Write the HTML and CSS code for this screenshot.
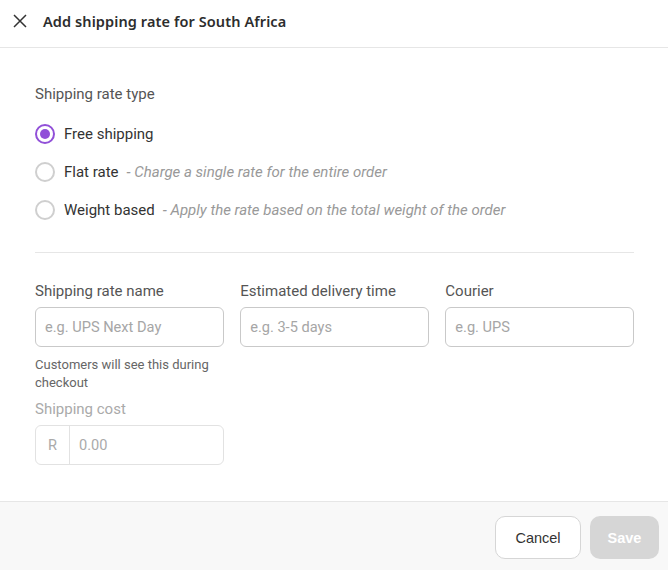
FILE: index.html
```html
<!DOCTYPE html>
<html>
<head>
<meta charset="utf-8">
<link rel="stylesheet" href="styles.css">
</head>
<body>
<div class="modal">
  <header class="header">
    <svg class="close" width="14" height="14" viewBox="0 0 14 14"><path d="M1 1L13 13M13 1L1 13" stroke="#333" stroke-width="1.5" fill="none"/></svg>
    <h1 class="title">Add shipping rate for South Africa</h1>
  </header>
  <main class="body">
    <div class="section-label">Shipping rate type</div>
    <div class="radios">
      <div class="radio-row"><span class="radio checked"></span><span class="radio-label">Free shipping</span></div>
      <div class="radio-row"><span class="radio"></span><span class="radio-label">Flat rate</span><span class="hint">- Charge a single rate for the entire order</span></div>
      <div class="radio-row"><span class="radio"></span><span class="radio-label">Weight based</span><span class="hint">- Apply the rate based on the total weight of the order</span></div>
    </div>
    <hr class="divider">
    <div class="fields">
      <div class="field">
        <label class="label">Shipping rate name</label>
        <div class="input"><span class="ph">e.g. UPS Next Day</span></div>
        <div class="help">Customers will see this during checkout</div>
        <label class="label disabled cost-label">Shipping cost</label>
        <div class="input prefixed"><span class="prefix">R</span><span class="ph value">0.00</span></div>
      </div>
      <div class="field">
        <label class="label">Estimated delivery time</label>
        <div class="input"><span class="ph">e.g. 3-5 days</span></div>
      </div>
      <div class="field">
        <label class="label">Courier</label>
        <div class="input"><span class="ph">e.g. UPS</span></div>
      </div>
    </div>
  </main>
  <footer class="footer">
    <button class="btn cancel">Cancel</button>
    <button class="btn save">Save</button>
  </footer>
</div>
</body>
</html>
```
FILE: styles.css
```css
* { box-sizing: border-box; }
html, body { margin: 0; padding: 0; background: #fff; }
body { font-family: Roboto, "Noto Sans", sans-serif; color: #333; width: 668px; height: 570px; overflow: hidden; }
.modal { display: flex; flex-direction: column; height: 570px; }
.header { height: 48px; display: flex; align-items: center; border-bottom: 1px solid #e6e6e6; padding-left: 13px; padding-bottom: 5px; }
.close { flex: none; }
.title { margin: 0 0 0 16px; font-family: "Noto Sans", sans-serif; font-size: 14.5px; font-weight: 600; color: #2d2d2d; letter-spacing: 0.1px; }
.body { flex: 1; padding: 37px 34px 0 35px; }
.section-label { font-size: 15px; color: #555; line-height: 18px; }
.radios { margin-top: 21px; display: flex; flex-direction: column; gap: 18px; }
.radio-row { display: flex; align-items: center; height: 20px; }
.radio { width: 20px; height: 20px; border-radius: 50%; border: 2px solid #cfcfcf; flex: none; position: relative; }
.radio.checked { border-color: #9150d8; }
.radio.checked::after { content: ""; position: absolute; left: 3px; top: 3px; width: 10px; height: 10px; border-radius: 50%; background: #9150d8; }
.radio-label { margin-left: 9px; font-size: 15px; color: #333; }
.hint { margin-left: 8px; font-size: 15px; font-style: italic; color: #999; }
.divider { border: 0; border-top: 1px solid #e6e6e6; margin: 32px 0 0; }
.fields { display: grid; grid-template-columns: 1fr 1fr 1fr; column-gap: 16.5px; margin-top: 29px; }
.field { display: flex; flex-direction: column; }
.label { font-size: 15px; color: #555; line-height: 18px; }
.label.disabled { color: #aaa; }
.input { margin-top: 7px; height: 40px; border: 1px solid #c9c9c9; border-radius: 6px; display: flex; align-items: center; padding-left: 9px; }
.ph { font-size: 14.6px; color: #a6a6a6; }
.help { margin-top: 9px; font-size: 13px; line-height: 18px; color: #666; }
.cost-label { margin-top: 8px; }
.prefixed { border-color: #e2e2e2; padding-left: 0; }
.prefix { width: 34px; height: 100%; display: flex; align-items: center; justify-content: center; border-right: 1px solid #e2e2e2; color: #aaa; font-size: 14.6px; }
.value { margin-left: 9px; color: #aaa; }
.footer { height: 69px; border-top: 1px solid #e6e6e6; background: #f8f8f8; display: flex; justify-content: flex-end; align-items: center; gap: 9px; padding-right: 9px; padding-top: 3px; }
.btn { height: 43px; border-radius: 10px; font-family: "Liberation Sans", Arial, sans-serif; font-size: 14.5px; }
.cancel { width: 86px; background: #fff; border: 1px solid #d6d6d6; color: #333; }
.save { width: 69px; background: #d6d6d6; border: 0; color: #fff; font-weight: bold; }
```
